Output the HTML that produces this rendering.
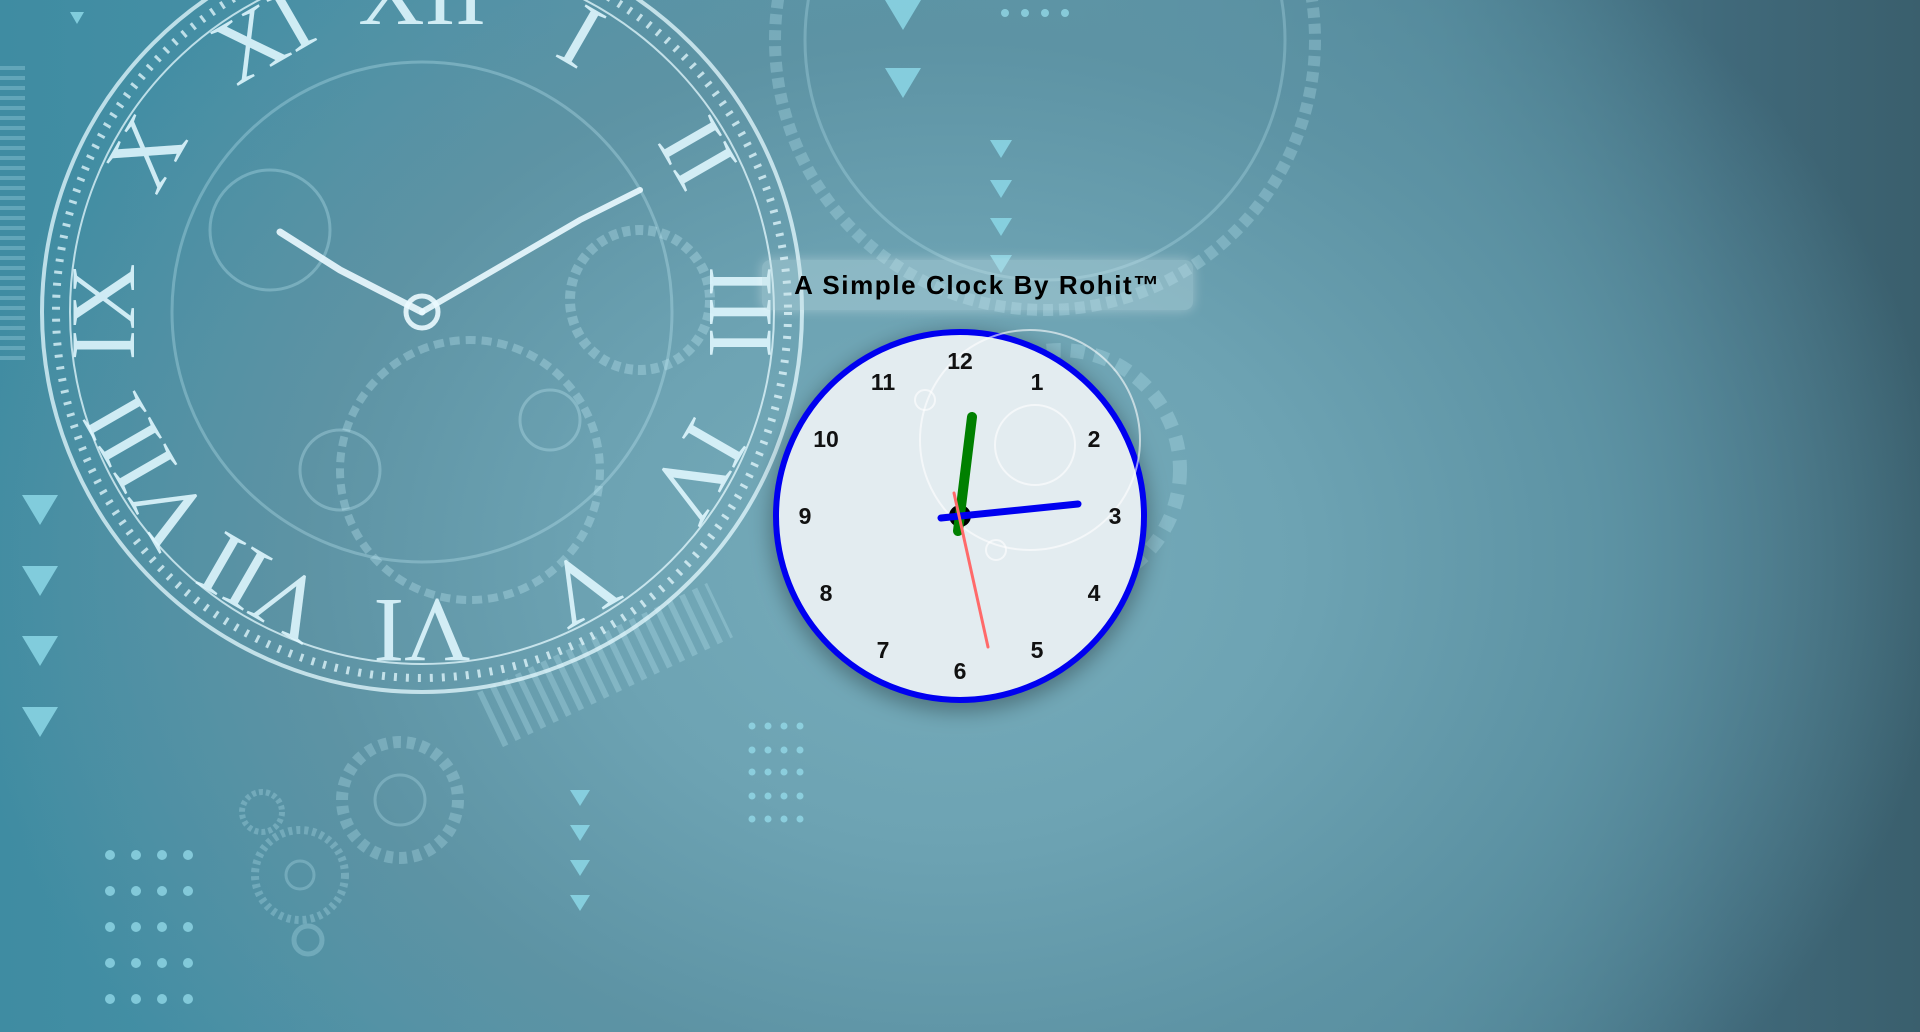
<!DOCTYPE html>
<html><head><meta charset="utf-8"><style>
html,body{margin:0;padding:0;width:1920px;height:1032px;overflow:hidden}
body{background:
radial-gradient(ellipse 1000px 800px at 950px 560px,#77adbb 0%,#6da3b3 35%,#5d93a4 65%,rgba(80,125,140,0) 100%),
linear-gradient(90deg,#3f8ca2 0%,#4e93a8 30%,#5e98aa 55%,#4f8496 75%,#40697a 90%,#3a5f6d 100%);font-family:"Liberation Sans",sans-serif}
svg{position:absolute;left:0;top:0}
.title{position:absolute;left:762px;top:260px;width:431px;height:50px;border-radius:8px;background:rgba(200,225,232,0.35);box-shadow:0 0 12px rgba(255,255,255,0.35);font-size:26px;font-weight:bold;letter-spacing:1.6px;color:#000;line-height:50px;text-align:center}
</style></head><body>
<svg width="1920" height="1032" viewBox="0 0 1920 1032">
<g fill="none" stroke="rgba(190,235,245,0.28)" stroke-width="3">
<circle cx="1045" cy="40" r="270" stroke-dasharray="10 6" stroke-width="12"/>
<circle cx="1045" cy="40" r="240"/>
<circle cx="1060" cy="470" r="120" stroke-dasharray="14 10" stroke-width="14"/>
<circle cx="400" cy="800" r="58" stroke-dasharray="8 6" stroke-width="12"/>
<circle cx="400" cy="800" r="25"/>
<circle cx="300" cy="875" r="45" stroke-dasharray="4 4" stroke-width="8"/>
<circle cx="300" cy="875" r="14"/>
<circle cx="262" cy="812" r="20" stroke-dasharray="4 3" stroke-width="6"/>
<circle cx="308" cy="940" r="14" stroke-width="5"/>
<path d="M490 720 L720 610" stroke-width="60" stroke-dasharray="6 8"/>
<path d="M10 360 L10 60" stroke-width="30" stroke-dasharray="4 6"/>
</g>
<g fill="none" stroke="rgba(230,250,255,0.75)">
<circle cx="422" cy="312" r="380" stroke-width="4"/>
<circle cx="422" cy="312" r="366" stroke-width="8" stroke-dasharray="3 9"/>
<circle cx="422" cy="312" r="352" stroke-width="2"/>
</g>
<g fill="none" stroke="rgba(200,240,250,0.3)" stroke-width="3">
<circle cx="422" cy="312" r="250"/><circle cx="270" cy="230" r="60"/><circle cx="640" cy="300" r="70" stroke-dasharray="8 5" stroke-width="10"/>
<circle cx="470" cy="470" r="130" stroke-dasharray="10 6" stroke-width="8"/><circle cx="340" cy="470" r="40"/><circle cx="550" cy="420" r="30"/>
</g>
<g fill="rgba(225,248,255,0.88)" font-family="Liberation Serif,serif" font-size="92" text-anchor="middle">
<text transform="translate(422 312) rotate(0) translate(0 -288)">XII</text>
<text transform="translate(422 312) rotate(30) translate(0 -288)">I</text>
<text transform="translate(422 312) rotate(60) translate(0 -288)">II</text>
<text transform="translate(422 312) rotate(90) translate(0 -288)">III</text>
<text transform="translate(422 312) rotate(120) translate(0 -288)">IV</text>
<text transform="translate(422 312) rotate(150) translate(0 -288)">V</text>
<text transform="translate(422 312) rotate(180) translate(0 -288)">VI</text>
<text transform="translate(422 312) rotate(210) translate(0 -288)">VII</text>
<text transform="translate(422 312) rotate(240) translate(0 -288)">VIII</text>
<text transform="translate(422 312) rotate(270) translate(0 -288)">IX</text>
<text transform="translate(422 312) rotate(300) translate(0 -288)">X</text>
<text transform="translate(422 312) rotate(330) translate(0 -288)">XI</text>
</g>
<g stroke="rgba(235,250,255,0.9)" stroke-linecap="round" fill="none">
<path d="M422 312 L580 220 L640 190" stroke-width="6"/>
<path d="M422 312 L340 270 L280 232" stroke-width="7"/>
<circle cx="422" cy="312" r="16" stroke-width="5"/>
</g>
<g fill="rgba(140,215,230,0.85)">
<path d="M22 495h36l-18 30z M22 566h36l-18 30z M22 636h36l-18 30z M22 707h36l-18 30z"/>
<path d="M885 0h36l-18 30z M885 68h36l-18 30z M990 140h22l-11 18z M990 180h22l-11 18z M990 218h22l-11 18z M990 255h22l-11 18z"/>
<path d="M570 790h20l-10 16z M570 825h20l-10 16z M570 860h20l-10 16z M570 895h20l-10 16z M70 12h14l-7 12z"/>
</g>
<g fill="rgba(150,220,235,0.75)">
<g id="d"><circle cx="110" cy="855" r="5"/><circle cx="136" cy="855" r="5"/><circle cx="162" cy="855" r="5"/><circle cx="188" cy="855" r="5"/></g>
<use href="#d" y="36"/><use href="#d" y="72"/><use href="#d" y="108"/><use href="#d" y="144"/>
<g id="e"><circle cx="752" cy="726" r="3.5"/><circle cx="768" cy="726" r="3.5"/><circle cx="784" cy="726" r="3.5"/><circle cx="800" cy="726" r="3.5"/></g>
<use href="#e" y="24"/><use href="#e" y="46"/><use href="#e" y="70"/><use href="#e" y="93"/>
<circle cx="1005" cy="13" r="4"/><circle cx="1025" cy="13" r="4"/><circle cx="1045" cy="13" r="4"/><circle cx="1065" cy="13" r="4"/>
</g>
<defs><filter id="sh" x="-20%" y="-20%" width="140%" height="140%"><feGaussianBlur stdDeviation="10"/></filter></defs>
<circle cx="960" cy="522" r="190" fill="rgba(0,0,0,0.3)" filter="url(#sh)"/>
<circle cx="960" cy="516" r="184" fill="#e3ecf0" stroke="#0000f0" stroke-width="6"/>
<g fill="none" stroke="rgba(255,255,255,0.6)" stroke-width="2">
<circle cx="1035" cy="445" r="40"/><circle cx="1030" cy="440" r="110"/><circle cx="925" cy="400" r="10"/><circle cx="996" cy="550" r="10"/>
</g>
<g font-size="23" font-weight="bold" text-anchor="middle" fill="#111" font-family="Liberation Sans,sans-serif">
<text x="960" y="369">12</text><text x="1037" y="390">1</text><text x="1094" y="447">2</text><text x="1115" y="524">3</text>
<text x="1094" y="601">4</text><text x="1037" y="658">5</text><text x="960" y="679">6</text><text x="883" y="658">7</text>
<text x="826" y="601">8</text><text x="805" y="524">9</text><text x="826" y="447">10</text><text x="883" y="390">11</text>
</g>
<circle cx="960" cy="516" r="11" fill="#000"/>
<line x1="958" y1="531" x2="972" y2="417" stroke="#008000" stroke-width="10" stroke-linecap="round"/>
<line x1="941" y1="518" x2="1078" y2="504" stroke="#0000f0" stroke-width="7" stroke-linecap="round"/>
<line x1="954" y1="493" x2="988" y2="647" stroke="#ff6a6a" stroke-width="3" stroke-linecap="round"/>
</svg>
<div class="title">A Simple Clock By Rohit™</div>
</body></html>
